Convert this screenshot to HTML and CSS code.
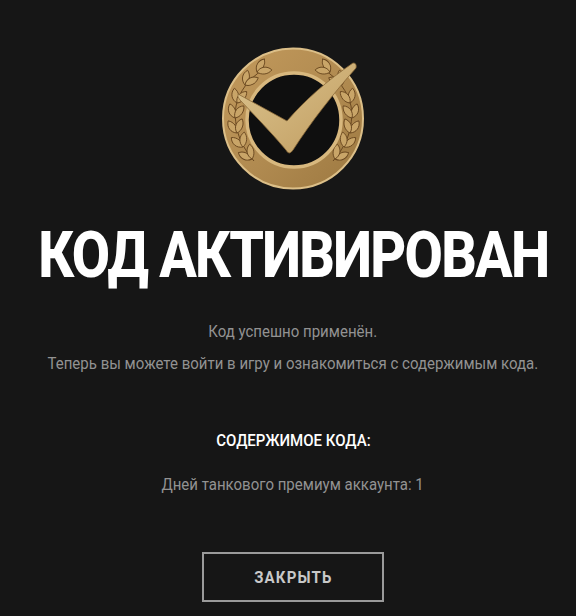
FILE: index.html
```html
<!DOCTYPE html>
<html lang="ru">
<head>
    <meta charset="UTF-8">
    <meta name="viewport" content="width=device-width, initial-scale=1.0">
    <title>Код активирован</title>
    <link rel="stylesheet" href="styles.css">
</head>
<body>
    <div class="activation">
        <svg class="badge" width="160" height="160" viewBox="0 0 160 160">
            <defs>
                <linearGradient id="gold" x1="0" y1="0" x2="1" y2="1">
                    <stop offset="0" stop-color="#c39a5c"/>
                    <stop offset="0.55" stop-color="#b08a50"/>
                    <stop offset="1" stop-color="#9c7840"/>
                </linearGradient>
                <linearGradient id="check" x1="0" y1="0" x2="1" y2="1">
                    <stop offset="0" stop-color="#dcc48e"/>
                    <stop offset="1" stop-color="#c09c60"/>
                </linearGradient>
                <path id="leaf" d="M0 0 C4 -5 11 -5 15 0 C11 4 4 4 0 0 Z" fill="#c9a568" stroke="#6a4820" stroke-width="0.9"/>
                <g id="laurel">
                    <path d="M41 123 C28 108 20 90 23 68 C26 54 36 40 50 32" fill="none" stroke="#6a4820" stroke-width="1"/>
                    <use href="#leaf" transform="translate(39 121) rotate(-155)"/>
                    <use href="#leaf" transform="translate(39 121) rotate(-99)"/>
                    <use href="#leaf" transform="translate(30 109) rotate(-141)"/>
                    <use href="#leaf" transform="translate(30 109) rotate(-85)"/>
                    <use href="#leaf" transform="translate(24 95) rotate(-126)"/>
                    <use href="#leaf" transform="translate(24 95) rotate(-70)"/>
                    <use href="#leaf" transform="translate(22 80) rotate(-110)"/>
                    <use href="#leaf" transform="translate(22 80) rotate(-54)"/>
                    <use href="#leaf" transform="translate(24 65) rotate(-100)"/>
                    <use href="#leaf" transform="translate(24 65) rotate(-50)"/>
                    <use href="#leaf" transform="translate(32 47) rotate(-80)"/>
                    <use href="#leaf" transform="translate(32 47) rotate(-28)"/>
                    <use href="#leaf" transform="translate(44 34) rotate(-60)"/>
                    <use href="#leaf" transform="translate(44 34) rotate(-8)"/>
                </g>
            </defs>
            <circle cx="80" cy="80.5" r="70" fill="url(#gold)" stroke="#dcbf88" stroke-width="2"/>
            <use href="#laurel"/>
            <use href="#laurel" transform="translate(161 0) scale(-1 1)"/>
            <circle cx="81" cy="82" r="47" fill="#0f0f0f" stroke="#d8b87e" stroke-width="3.5"/>
            <path d="M25 56 L74 83 C92 62 115 42 140 25 Q144 25 143 30 C120 56 98 84 80 112 Q76 118 73 112 C58 94 42 78 27 62 Q24 59 25 56 Z" fill="url(#check)" stroke="#8a6a38" stroke-width="0.8"/>
        </svg>
        <h1 class="activation-title"><span>КОД АКТИВИРОВАН</span></h1>
        <p class="activation-text">Код успешно применён.</p>
        <p class="activation-text">Теперь вы можете войти в игру и ознакомиться с содержимым кода.</p>
        <h3 class="content-title">СОДЕРЖИМОЕ КОДА:</h3>
        <p class="activation-text">Дней танкового премиум аккаунта: 1</p>
        <button class="close-button"><span>ЗАКРЫТЬ</span></button>
    </div>
</body>
</html>
```

FILE: styles.css
```css
html, body {
    margin: 0;
    height: 616px;
    overflow: hidden;
    background-color: #161616;
}
body {
    font-family: Roboto, "Liberation Sans", sans-serif;
}
.activation {
    display: flex;
    flex-direction: column;
    align-items: center;
    padding: 38px 0 0 10px;
}
.badge {
    display: block;
}
.activation-title {
    margin: 19px 0 0;
    font-size: 65px;
    line-height: 76px;
    font-weight: 800;
    letter-spacing: -2px;
    color: #fff;
    white-space: nowrap;
}
.activation-title span {
    display: inline-block;
    transform: scaleX(0.855);
}
.activation-text {
    margin: 0 0 11px;
    font-size: 17px;
    line-height: 21px;
    color: #929292;
    white-space: nowrap;
    transform: scaleX(0.883);
}
.activation-title + .activation-text {
    margin-top: 28px;
}
.content-title {
    margin: 45px 0 23px;
    font-size: 17px;
    line-height: 21px;
    font-weight: 500;
    color: #fff;
    white-space: nowrap;
    transform: scaleX(0.883);
}
.close-button {
    margin-top: 46px;
    width: 182px;
    height: 50px;
    background: none;
    border: 2px solid #9a9a9a;
    font-family: inherit;
    font-size: 17px;
    font-weight: 700;
    letter-spacing: 1.3px;
    color: #c8c8c8;
}
.close-button span {
    display: inline-block;
    transform: scaleX(0.883);
}
```
